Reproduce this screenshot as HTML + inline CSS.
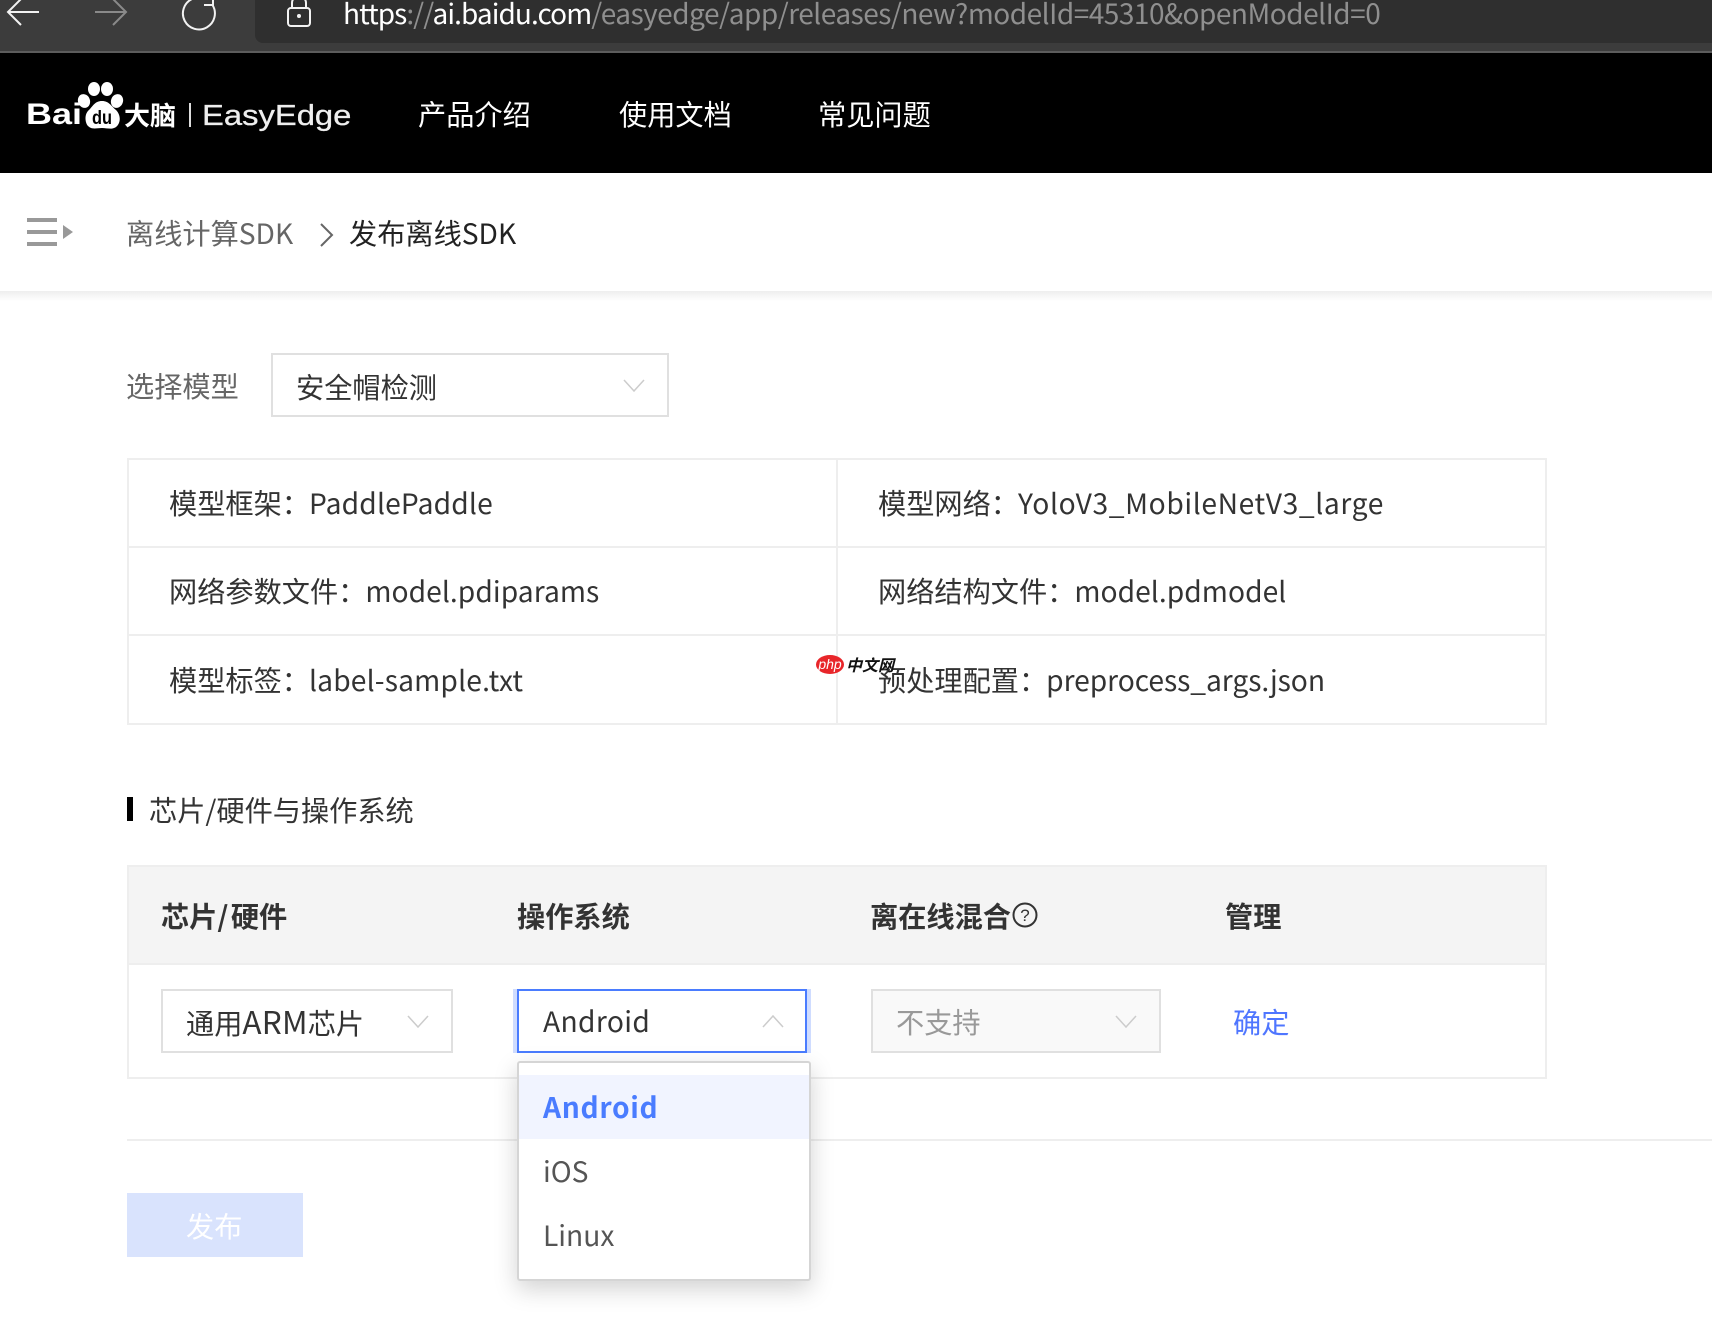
<!DOCTYPE html>
<html lang="zh-CN">
<head>
<meta charset="utf-8">
<title>发布离线SDK</title>
<style>
html,body{margin:0;padding:0;background:#fff}
body{position:relative;width:1712px;height:1330px;overflow:hidden;font-family:"Noto Sans CJK SC","Liberation Sans",sans-serif;font-size:28.2px;color:#333}
.a{position:absolute;white-space:nowrap;line-height:40px;height:40px}
.b{position:absolute;box-sizing:border-box}
svg{position:absolute;overflow:visible}
.sel{position:absolute;box-sizing:border-box;border:2px solid #e0e0e0;background:#fff}
.line{position:absolute;background:#eee}
.l{margin-left:-1px}
</style>
</head>
<body>
<!-- browser chrome -->
<div class="b" style="left:0;top:0;width:1712px;height:51px;background:#3c3c3c"></div>
<div class="b" style="left:0;top:51px;width:1712px;height:2px;background:#5c5c5c"></div>
<div class="b" style="left:255px;top:-10px;width:1470px;height:53px;background:#2f2f2f;border-radius:8px"></div>
<svg style="left:0;top:0" width="340" height="50" fill="none">
  <path d="M39 12H8M21 -1L8 12L21 25" stroke="#f2f2f2" stroke-width="2"/>
  <path d="M95 12H126M113 -1L126 12L113 25" stroke="#8a8a8a" stroke-width="2"/>
  <path d="M212.500 5A16 16 0 1 1 192 -1" stroke="#f2f2f2" stroke-width="2"/>
  <path d="M204 5H213V-4" stroke="#f2f2f2" stroke-width="2"/>
  <rect x="288" y="8" width="22" height="18" rx="3" stroke="#f2f2f2" stroke-width="2"/>
  <path d="M292 8V3A7 7 0 0 1 306 3V8" stroke="#f2f2f2" stroke-width="2"/>
  <circle cx="299" cy="16" r="2" fill="#f2f2f2"/>
</svg>
<div class="a" id="url" style="left:343px;top:-7px;font-size:28px;color:#8f8f8f;letter-spacing:-.49px"><span style="letter-spacing:-.93px"><span style="color:#fff">https</span>://<span style="color:#fff">ai.baidu.com</span></span>/easyedge/app/releases/new?modelId=45310&amp;openModelId=0</div>

<!-- header -->
<div class="b" style="left:0;top:53px;width:1712px;height:120px;background:#000"></div>
<div class="a" style="left:26px;top:95px;font:bold 30px/40px 'Liberation Sans',sans-serif;color:#fff;transform:scaleX(1.2);transform-origin:0 50%">Bai</div>
<svg style="left:0;top:53px" width="130" height="90" fill="#fff">
  <ellipse cx="94" cy="36" rx="6" ry="7"/>
  <ellipse cx="107" cy="36" rx="6" ry="7"/>
  <ellipse cx="84" cy="48" rx="6" ry="7" transform="rotate(-20 84 48)"/>
  <ellipse cx="117" cy="48" rx="6" ry="7" transform="rotate(20 117 48)"/>
  <path d="M102 48C95 48 93 53 89 57C84 61 85 70 88 73C92 77 97 75 102 75C107 75 112 77 116 74C121 70 121 62 116 57C111 53 109 48 102 48Z"/>
  <text x="92" y="71" font-family="Liberation Sans" font-size="19" font-weight="bold" fill="#000" textLength="20" lengthAdjust="spacingAndGlyphs">du</text>
</svg>
<div class="a" style="left:124px;top:95px;font-size:26px;font-weight:700;color:#fff">大脑</div>
<div class="b" style="left:189px;top:103px;width:2px;height:24px;background:#ddd"></div>
<div class="a" style="left:202px;top:96px;font:29px/40px 'Liberation Sans',sans-serif;color:#eee;transform:scaleX(1.13);transform-origin:0 50%;-webkit-text-stroke:.3px #eee">EasyEdge</div>
<div class="a" style="left:418px;top:94px;color:#fff">产品介绍</div>
<div class="a" style="left:619px;top:94px;color:#fff">使用文档</div>
<div class="a" style="left:818px;top:94px;color:#fff">常见问题</div>

<!-- breadcrumb -->
<div class="b" style="left:0;top:291px;width:1712px;height:10px;background:linear-gradient(#eee,#fff)"></div>
<svg style="left:0;top:200px" width="360" height="60">
  <path d="M27 18H57V22H27ZM27 30H57V34H27ZM27 42H57V46H27Z" fill="#999"/>
  <path d="M63 25L73 32L63 39Z" fill="#999"/>
  <path d="M321 24L332 35L321 46" fill="none" stroke="#666" stroke-width="2"/>
</svg>
<div class="a" style="left:126px;top:212.500px;color:#666">离线计算SDK</div>
<div class="a" style="left:349px;top:212.500px;color:#222">发布离线SDK</div>

<!-- model -->
<div class="a" style="left:126px;top:366px;color:#666">选择模型</div>
<div class="sel" style="left:271px;top:353px;width:398px;height:64px"></div>
<div class="a" style="left:296px;top:366.500px">安全帽检测</div>

<!-- info table -->
<div class="b" style="left:127px;top:458px;width:1420px;height:267px;border:2px solid #eee"></div>
<div class="line" style="left:127px;top:546px;width:1420px;height:2px"></div>
<div class="line" style="left:127px;top:634px;width:1420px;height:2px"></div>
<div class="line" style="left:836px;top:458px;width:2px;height:267px"></div>
<div class="a" style="left:169px;top:483px">模型框架：<span class="l" style="letter-spacing:.17px">PaddlePaddle</span></div>
<div class="a" style="left:878px;top:483px">模型网络：<span class="l" style="letter-spacing:.62px">YoloV3_MobileNetV3_large</span></div>
<div class="a" style="left:169px;top:571px">网络参数文件：<span class="l" style="letter-spacing:.06px">model.pdiparams</span></div>
<div class="a" style="left:878px;top:571px">网络结构文件：<span class="l" style="letter-spacing:.05px">model.pdmodel</span></div>
<div class="a" style="left:169px;top:660px">模型标签：<span class="l" style="letter-spacing:.18px">label-sample.txt</span></div>
<div class="a" style="left:878px;top:660px">预处理配置：<span class="l" style="letter-spacing:-.05px">preprocess_args.json</span></div>

<!-- watermark -->
<svg style="left:816px;top:654px" width="30" height="22">
  <ellipse cx="14" cy="10.500" rx="14" ry="9.500" fill="#e8262a"/>
  <text x="14" y="15" text-anchor="middle" font-family="Liberation Sans" font-style="italic" font-size="14" fill="#fff">php</text>
</svg>
<div class="a" style="left:846px;top:644px;font-size:16px;font-weight:700;font-style:italic;color:#111">中文网</div>

<!-- section title -->
<div class="b" style="left:127px;top:797px;width:6px;height:24px;background:#000"></div>
<div class="a" style="left:149px;top:790px">芯片/硬件与操作系统</div>

<!-- table 2 -->
<div class="b" style="left:127px;top:865px;width:1420px;height:214px;border:2px solid #eee"></div>
<div class="b" style="left:127px;top:865px;width:1420px;height:100px;background:#f4f4f4;border:2px solid #eee"></div>
<div class="a" style="left:161px;top:896px;font-weight:700">芯片<span style="letter-spacing:2.500px">/</span>硬件</div>
<div class="a" style="left:517px;top:896px;font-weight:700">操作系统</div>
<div class="a" style="left:870px;top:896px;font-weight:700">离在线混合</div>
<svg style="left:1012px;top:902px" width="26" height="26">
  <circle cx="13" cy="13" r="11.500" fill="none" stroke="#333" stroke-width="2"/>
  <text x="13" y="19" text-anchor="middle" font-family="Liberation Sans" font-size="17" fill="#333">?</text>
</svg>
<div class="a" style="left:1225px;top:896px;font-weight:700">管理</div>

<div class="sel" style="left:161px;top:989px;width:292px;height:64px"></div>
<div class="a" style="left:186px;top:1001px">通用<span style="font-size:31.500px;letter-spacing:.2px">ARM</span>芯片</div>
<div class="b" style="left:513px;top:989px;width:298px;height:64px;background:#cfdcff"></div>
<div class="sel" style="left:517px;top:989px;width:290px;height:64px;border-color:#4a7cff"></div>
<div class="a" style="left:543px;top:1001px;letter-spacing:.35px">Android</div>
<div class="sel" style="left:871px;top:989px;width:290px;height:64px;background:#f9f9f9"></div>
<div class="a" style="left:896px;top:1002px;color:#999">不支持</div>
<div class="a" style="left:1233px;top:1002px;color:#4f76ff">确定</div>

<svg style="left:0;top:0" width="1200" height="1060" fill="none" stroke="#ccc" stroke-width="1.500">
  <path d="M624 380L634 391L644 380"/>
  <path d="M408 1016L418 1027L428 1016"/>
  <path d="M763 1027L773 1016L783 1027"/>
  <path d="M1116 1016L1126 1027L1136 1016"/>
</svg>

<div class="line" style="left:127px;top:1139px;width:1585px;height:2px"></div>

<!-- publish -->
<div class="b" style="left:127px;top:1193px;width:176px;height:64px;background:#d9e3fd"></div>
<div class="a" style="left:186px;top:1206px;color:#fff">发布</div>

<!-- dropdown -->
<div class="b" style="left:517px;top:1061px;width:294px;height:220px;background:#fff;border:2px solid #d5d5d5;border-radius:3px;box-shadow:0 8px 24px rgba(0,0,0,.18)"></div>
<div class="b" style="left:519px;top:1075px;width:290px;height:64px;background:#f1f4ff"></div>
<div class="a" style="left:543px;top:1087px;font-weight:700;color:#4a7cff;letter-spacing:.68px">Android</div>
<div class="a" style="left:543px;top:1151px;color:#555">iOS</div>
<div class="a" style="left:543px;top:1215px;color:#555">Linux</div>
</body>
</html>
